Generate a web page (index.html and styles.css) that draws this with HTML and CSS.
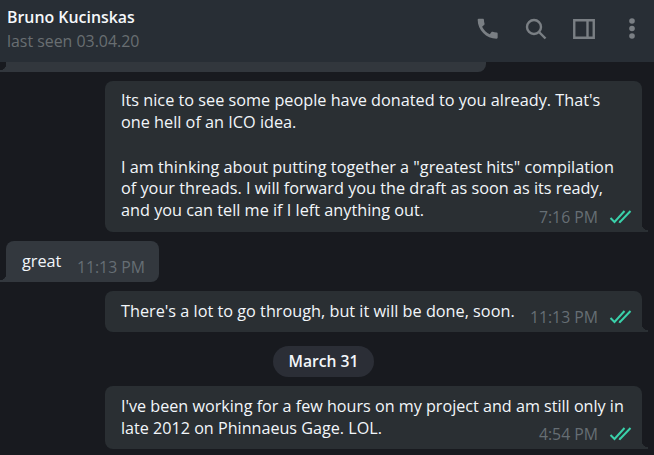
FILE: index.html
```html
<!DOCTYPE html>
<html lang="en">
<head>
<meta charset="utf-8">
<title>Bruno Kucinskas</title>
<link rel="stylesheet" href="styles.css">
</head>
<body>
<div class="app">
  <header class="header">
    <div class="peer">
      <div class="name">Bruno Kucinskas</div>
      <div class="status">last seen 03.04.20</div>
    </div>
    <div class="actions">
      <svg class="icon" viewBox="1.500 1.500 21.600 21.600"><path d="M20.010 15.380c-1.230 0-2.420-.2-3.530-.56-.35-.12-.74-.03-1.010.24l-1.570 1.970c-2.830-1.350-5.480-3.900-6.890-6.830l1.950-1.660c.27-.28.35-.67.24-1.020-.37-1.110-.56-2.300-.56-3.530 0-.54-.45-.99-.99-.99H4.190C3.650 3 3 3.240 3 3.990 3 13.280 10.730 21 20.010 21c.71 0 .99-.63.99-1.180v-3.450c0-.54-.45-.99-.99-.99z"/></svg>
      <svg class="icon" viewBox="0 0 24 24"><circle class="line" cx="10" cy="10" r="7"/><path class="line" d="M15 15l6.500 6.500"/></svg>
      <svg class="icon" viewBox="0 0 24 24"><path class="line" d="M2.250 3.250h19.500v17.500H2.250zM15.500 3.250v17.500"/></svg>
      <svg class="icon" viewBox="0 0 24 24"><circle cx="12" cy="4" r="2.800"/><circle cx="12" cy="11.500" r="2.800"/><circle cx="12" cy="19" r="2.800"/></svg>
    </div>
  </header>
  <main class="chat">
    <div class="stub"></div>

    <div class="msg out tall">
      <p>Its nice to see some people have donated to you already. That's<br>one hell of an ICO idea.</p>
      <p class="next">I am thinking about putting together a "greatest hits" compilation<br>of your threads. I will forward you the draft as soon as its ready,<br>and you can tell me if I left anything out.</p>
      <div class="meta"><span class="time">7:16 PM</span><svg class="ticks" viewBox="0 0 22 14"><path d="M1 8l4 4L15 1M9.500 11.500l1 .5L21 1"/></svg></div>
    </div>

    <div class="msg in">
      <span class="text">great</span><span class="time">11:13 PM</span>
    </div>

    <div class="msg out short">
      <span class="text">There's a lot to go through, but it will be done, soon.</span>
      <div class="meta"><span class="time">11:13 PM</span><svg class="ticks" viewBox="0 0 22 14"><path d="M1 8l4 4L15 1M9.500 11.500l1 .5L21 1"/></svg></div>
    </div>

    <div class="date"><span>March 31</span></div>

    <div class="msg out tall last">
      <p>I've been working for a few hours on my project and am still only in<br>late 2012 on Phinnaeus Gage. LOL.</p>
      <div class="meta"><span class="time">4:54 PM</span><svg class="ticks" viewBox="0 0 22 14"><path d="M1 8l4 4L15 1M9.500 11.500l1 .5L21 1"/></svg></div>
    </div>
  </main>
</div>
</body>
</html>
```
FILE: styles.css
```css
* { box-sizing: border-box; }
html, body { margin: 0; padding: 0; }
body {
  width: 654px;
  height: 455px;
  overflow: hidden;
  background: #181a1f;
  font-family: "Open Sans", sans-serif;
  color: #f2f6fa;
}
.app { display: flex; flex-direction: column; height: 455px; overflow: hidden; }
.header {
  flex: none;
  height: 62px;
  background: #282e35;
  display: flex;
  justify-content: space-between;
  padding: 6px 10px 0 7px;
}
.name { font-size: 15.900px; font-weight: 600; line-height: 22px; color: #f5f8fb; }
.status { font-size: 15.900px; line-height: 22px; margin-top: 2px; color: #696e72; }
.actions { display: flex; gap: 24px; padding-top: 11px; align-items: flex-start; }
.icon { width: 24px; height: 24px; fill: #7a7f84; display: block; }
.line { fill: none; stroke: #7a7f84; stroke-width: 2.400; }
.chat { display: flex; flex-direction: column; align-items: flex-start; }
.stub {
  position: relative;
  margin-left: 6px;
  width: 480px;
  height: 10px;
  background: #32373d;
  border-radius: 0 0 8px 0;
  margin-bottom: 9px;
}
.stub::after {
  content: "";
  position: absolute;
  left: -6px;
  bottom: 0;
  width: 6px;
  height: 8px;
  background: radial-gradient(circle at 0 0, transparent 6px, #32373d 6.500px);
}
.msg {
  position: relative;
  font-size: 16.250px;
  line-height: 21.500px;
  border-radius: 8px;
}
.msg p { margin: 0; white-space: nowrap; }
.msg .next { margin-top: 23.500px; }
.out {
  width: 537px;
  margin-left: 105px;
  background: #2a2f33;
  margin-bottom: 9px;
  border-bottom-right-radius: 0;
  padding: 9px 16px 0;
}
.out::after {
  content: "";
  position: absolute;
  right: -6px;
  bottom: 0;
  width: 6px;
  height: 8px;
  background: radial-gradient(circle at 100% 0, transparent 6px, #2a2f33 6.500px);
}
.tall { padding-bottom: 11px; }
.last { padding-top: 10px; padding-bottom: 10px; font-size: 16.150px; }
.short { height: 41px; padding-top: 10px; display: flex; justify-content: space-between; }
.meta { display: flex; align-items: center; gap: 11px; position: absolute; right: 10px; bottom: 6px; }
.time { font-size: 15.800px; line-height: 18px; color: #666e74; }
.ticks { width: 23px; height: 14px; fill: none; stroke: #3ad1aa; stroke-width: 2; display: block; }
.in {
  margin-left: 6px;
  width: 153px;
  height: 41px;
  background: #33383e;
  margin-bottom: 9px;
  border-bottom-left-radius: 0;
  padding: 10px 14px 0 16px;
  display: flex;
  justify-content: space-between;
}
.in::after {
  content: "";
  position: absolute;
  left: -6px;
  bottom: 0;
  width: 6px;
  height: 8px;
  background: radial-gradient(circle at 0 0, transparent 6px, #33383e 6.500px);
}
.in .time { margin-top: 7px; }
.date { align-self: stretch; display: flex; justify-content: center; margin: 5px 0 9px; }
.date span {
  margin-right: 7px;
  width: 101px;
  height: 31px;
  border-radius: 16px;
  background: #2b2e36;
  text-align: center;
  font-size: 15.700px;
  font-weight: 600;
  line-height: 30px;
}
```
